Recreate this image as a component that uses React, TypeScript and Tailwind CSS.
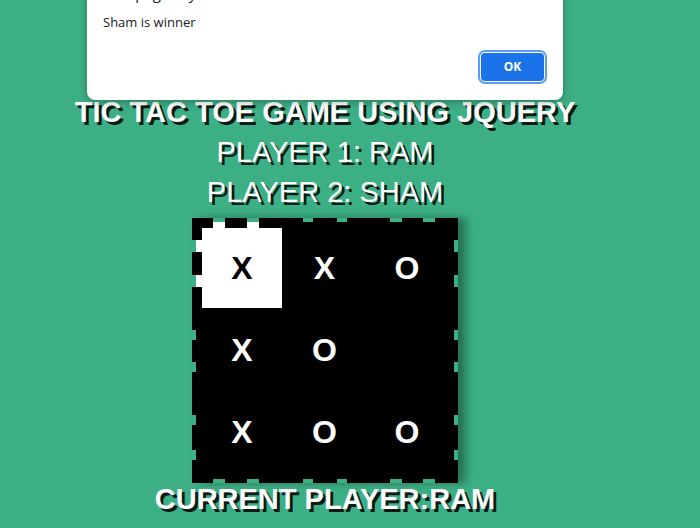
const cells = ["X", "X", "O", "X", "O", "", "X", "O", "O"];

// where the dashed outline of the board lets the page show through
const hGaps = [[21, 33], [55, 67], [111, 121], [145, 155], [198, 210], [231, 243]];
const vGaps = [[22, 34], [57, 69], [112, 122], [144, 154], [197, 207], [232, 242]];

function DashEdge() {
  return (
    <svg className="absolute inset-0 pointer-events-none" width="266" height="265" viewBox="0 0 266 265">
      {hGaps.map(([a, b], i) => (
        <g key={"h" + i}>
          <rect x={a} y={0} width={b - a} height={4} fill="#3daf84" />
          <rect x={a} y={261} width={b - a} height={4} fill="#3daf84" />
          {i < 2 && <rect x={a} y={4} width={b - a} height={6} fill="#fff" />}
        </g>
      ))}
      {vGaps.map(([a, b], i) => (
        <g key={"v" + i}>
          <rect x={0} y={a} width={4} height={b - a} fill="#3daf84" />
          <rect x={262} y={a} width={4} height={b - a} fill="#3daf84" />
          {i < 2 && <rect x={4} y={a} width={6} height={b - a} fill="#fff" />}
        </g>
      ))}
    </svg>
  );
}

function Board() {
  return (
    <div className="relative w-[266px] h-[265px] bg-black pt-[10px] pl-[10px] grid grid-cols-[repeat(3,80px)] grid-rows-[repeat(3,80px)] gap-x-[2.5px] gap-y-[2px] shadow-[8px_0_8px_rgba(0,0,0,0.35)]">
      {cells.map((mark, i) => (
        <div
          key={i}
          className={`flex items-center justify-center text-[32px] font-bold ${
            i === 0 ? "bg-white text-black" : "text-white"
          }`}
        >
          {mark}
        </div>
      ))}
      <DashEdge />
    </div>
  );
}

function AlertBox() {
  return (
    <div className="absolute left-[87px] -top-[17px] w-[476px] bg-white rounded-b-[8px] shadow-[0_2px_8px_rgba(0,0,0,0.3)] px-4 pb-4 font-['Open_Sans',sans-serif]">
      <div className="text-[15px] leading-[20px] text-[#202124]">This page says</div>
      <div className="mt-[10px] text-[13px] leading-[18px] text-[#202124]">Sham is winner</div>
      <div className="mt-[19px] flex justify-end">
        <button className="m-[3px] w-[63px] h-[28px] rounded-[4px] bg-[#1a73e8] text-white text-[12px] font-bold ring-2 ring-[#5b9cf1] ring-offset-1 ring-offset-white">
          OK
        </button>
      </div>
    </div>
  );
}

export default function App() {
  return (
    <div className="relative min-h-screen bg-[#3daf84] overflow-hidden font-['Liberation_Sans',Arial,sans-serif]">
      <div className="w-[650px] pt-[92px] flex flex-col items-center text-white uppercase [text-shadow:3px_3px_0_rgba(0,0,0,0.85)]">
        <h1 className="text-[29px] leading-[40px] font-bold">Tic Tac Toe Game using jQuery</h1>
        <div className="text-[29px] leading-[40px]">Player 1: Ram</div>
        <div className="text-[29px] leading-[40px]">Player 2: Sham</div>
        <div className="mt-[6px] [text-shadow:none]">
          <Board />
        </div>
        <div className="text-[29px] leading-[32px] font-bold">Current Player:Ram</div>
      </div>
      <AlertBox />
    </div>
  );
}
